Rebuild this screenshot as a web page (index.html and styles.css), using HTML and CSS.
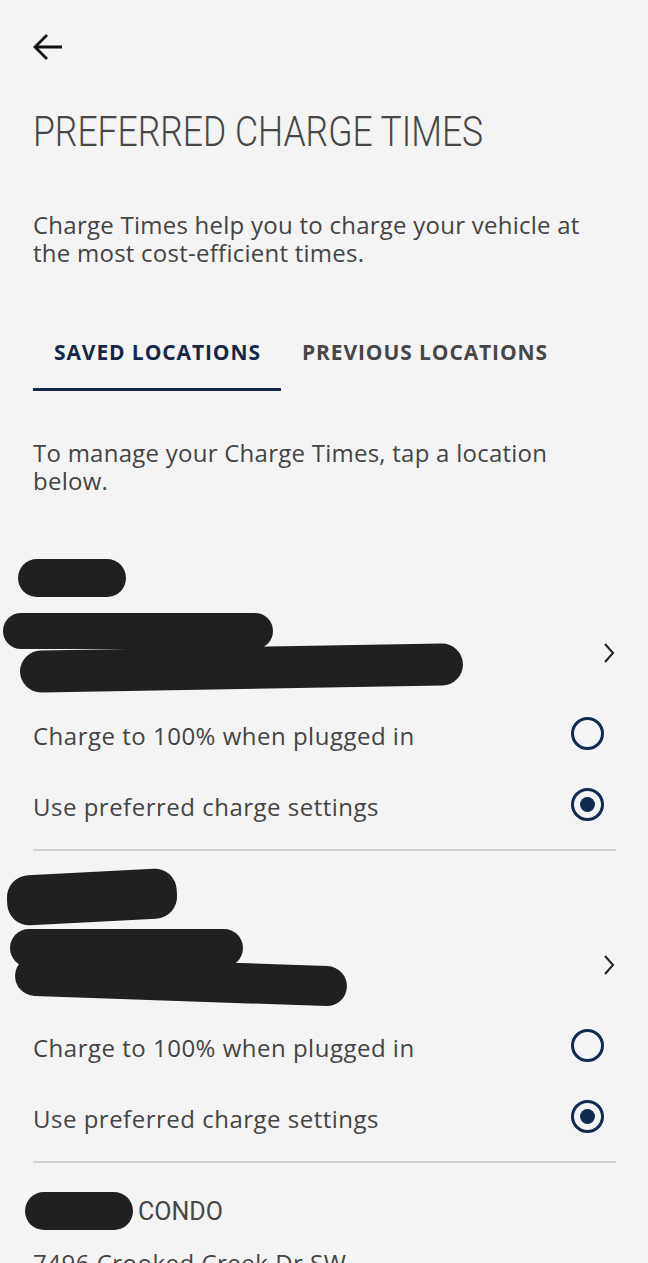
FILE: index.html
```html
<!DOCTYPE html>
<html lang="en">
<head>
    <meta charset="UTF-8">
    <meta name="viewport" content="width=device-width, initial-scale=1.0">
    <title>Preferred Charge Times</title>
    <link rel="stylesheet" href="styles.css">
</head>
<body>
    <div class="page">
        <button class="back-btn" aria-label="Back">
            <svg width="30" height="28" viewBox="0 0 30 28">
                <path d="M2 14 H29 M14 2 L2 14 L14 26" fill="none" stroke="#111" stroke-width="2.8" stroke-linejoin="miter"/>
            </svg>
        </button>

        <h1 class="title">PREFERRED CHARGE TIMES</h1>

        <p class="intro">Charge Times help you to charge your vehicle at the most cost-efficient times.</p>

        <div class="tabs">
            <div class="tab active">SAVED LOCATIONS</div>
            <div class="tab">PREVIOUS LOCATIONS</div>
        </div>

        <p class="hint">To manage your Charge Times, tap a location below.</p>

        <!-- location 1 -->
        <div class="location">
            <div class="loc-head">
                <div class="loc-text">
                    <span class="redact r1a"></span>
                    <span class="redact r1b"></span>
                    <span class="redact r1c"></span>
                </div>
                <svg class="chevron" width="12" height="22" viewBox="0 0 12 22">
                    <path d="M2 2 L10 11 L2 20" fill="none" stroke="#222" stroke-width="2"/>
                </svg>
            </div>
            <div class="option">
                <span>Charge to 100% when plugged in</span>
                <span class="radio"></span>
            </div>
            <div class="option">
                <span>Use preferred charge settings</span>
                <span class="radio checked"></span>
            </div>
        </div>

        <!-- location 2 -->
        <div class="location">
            <div class="loc-head">
                <div class="loc-text">
                    <span class="redact r2a"></span>
                    <span class="redact r2b"></span>
                    <span class="redact r2c"></span>
                </div>
                <svg class="chevron" width="12" height="22" viewBox="0 0 12 22">
                    <path d="M2 2 L10 11 L2 20" fill="none" stroke="#222" stroke-width="2"/>
                </svg>
            </div>
            <div class="option">
                <span>Charge to 100% when plugged in</span>
                <span class="radio"></span>
            </div>
            <div class="option">
                <span>Use preferred charge settings</span>
                <span class="radio checked"></span>
            </div>
        </div>

        <!-- location 3 -->
        <div class="location last">
            <div class="loc-name"><span class="redact r3a"></span>S CONDO</div>
            <div class="loc-address">7496 Crooked Creek Dr SW</div>
        </div>
    </div>
</body>
</html>
```

FILE: styles.css
```css
body {
    margin: 0;
    background-color: #f4f4f4;
    color: #444;
    font-family: "Open Sans", "Noto Sans", Arial, sans-serif;
    overflow: hidden;
}

.page {
    padding: 0 32px 0 33px;
}

.back-btn {
    display: block;
    margin-top: 33px;
    padding: 0;
    border: none;
    background: none;
    height: 28px;
}

.title {
    display: inline-block;
    margin: 46px 0 0;
    font-family: Roboto, sans-serif;
    font-weight: 300;
    font-size: 42px;
    line-height: 50px;
    color: #474747;
    white-space: nowrap;
    transform: scaleX(0.845);
    transform-origin: left center;
}

.intro, .hint {
    margin: 0;
    max-width: 560px;
    font-size: 24px;
    line-height: 28px;
    letter-spacing: 0.25px;
    color: #444;
}

.intro {
    margin-top: 54px;
}

.tabs {
    display: flex;
    margin-top: 59px;
}

.tab {
    font-size: 21px;
    font-weight: 700;
    color: #474747;
    padding: 12px 20px 22px 21px;
    letter-spacing: 0.9px;
}

.tab.active {
    color: #15284a;
    border-bottom: 3px solid #15284a;
}

.hint {
    margin-top: 48px;
}

.location {
    border-bottom: 2px solid #d2d2d2;
    padding-bottom: 7px;
}

.location.last {
    border-bottom: none;
}

.loc-head {
    display: flex;
    align-items: flex-end;
    justify-content: space-between;
}

.loc-text {
    display: flex;
    flex-direction: column;
}

.chevron {
    margin-right: 1px;
    margin-bottom: 25px;
}

.redact {
    display: block;
    background-color: #202020;
    border-radius: 22px;
}

/* redaction scribbles over the location names */
.r1a { width: 108px; height: 38px; margin: 64px 0 0 -15px; }
.r1b { width: 270px; height: 36px; margin: 16px 0 0 -30px; }
.r1c { width: 443px; height: 42px; margin: -2px 0 0 -13px; transform: rotate(-1deg); }

.r2a { width: 170px; height: 50px; margin: 21px 0 0 -26px; transform: rotate(-3deg); }
.r2b { width: 233px; height: 38px; margin: 7px 0 0 -23px; }
.r2c { width: 332px; height: 40px; margin: -6px 0 0 -18px; transform: rotate(2deg); }

.r3a { display: inline-block; width: 108px; height: 38px; margin: 0 -16px 0 -8px; vertical-align: middle; position: relative; top: -2px; }

.option {
    display: flex;
    align-items: center;
    justify-content: space-between;
    font-size: 24px;
    letter-spacing: 0.5px;
    height: 71px;
}

.loc-head + .option {
    margin-top: 11px;
}

.radio {
    width: 27px;
    height: 27px;
    border: 3px solid #102b4e;
    border-radius: 50%;
    margin-right: 12px;
    position: relative;
    margin-top: -4px;
}

.radio.checked::after {
    content: "";
    position: absolute;
    top: 6px;
    left: 6px;
    width: 15px;
    height: 15px;
    border-radius: 50%;
    background-color: #102b4e;
}

.loc-name {
    margin-top: 31px;
    font-family: Roboto, sans-serif;
    font-weight: 400;
    font-size: 25px;
    color: #474747;
}

.loc-address {
    margin-top: 14px;
    font-size: 24px;
    letter-spacing: 0.5px;
}
```
